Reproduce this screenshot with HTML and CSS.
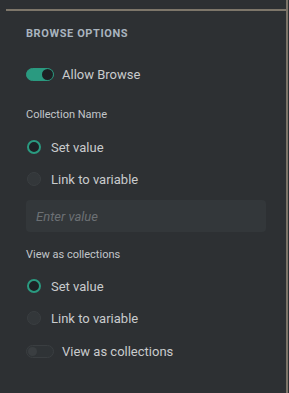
FILE: index.html
```html
<!DOCTYPE html>
<html lang="en">
<head>
  <meta charset="UTF-8" />
  <meta name="viewport" content="width=device-width, initial-scale=1.0"/>
  <title>Browse Options</title>
  <link rel="stylesheet" href="styles.css">
</head>
<body>

<div class="panel">
  <h4 class="section-title">BROWSE OPTIONS</h4>

  <label class="switch-row allow">
    <span class="switch on"><span class="knob"></span></span>
    Allow Browse
  </label>

  <p class="field-label first">Collection Name</p>
  <div class="radio-row"><span class="radio checked"></span>Set value</div>
  <div class="radio-row"><span class="radio"></span>Link to variable</div>
  <input class="text-input" type="text" placeholder="Enter value">

  <p class="field-label second">View as collections</p>
  <div class="radio-row"><span class="radio checked"></span>Set value</div>
  <div class="radio-row"><span class="radio"></span>Link to variable</div>

  <label class="switch-row last">
    <span class="switch"><span class="knob"></span></span>
    View as collections
  </label>
</div>

</body>
</html>
```

FILE: styles.css
```css
body {
  font-family: Roboto, 'Noto Sans', sans-serif;
  margin: 0;
  width: 286px;
  height: 393px;
  background: #2d3033;
  border-right: 2px solid #7d766a;
  overflow: hidden;
}
.panel {
  margin: 9px 0 0 6px;
  width: 240px;
  padding: 0 20px;
  border-top: 2px solid #7d766a;
}
.section-title {
  margin: 15px 0 0;
  font-size: 11px;
  line-height: 16px;
  font-weight: 700;
  letter-spacing: 0.6px;
  color: #a9b4bf;
}
.switch-row {
  display: flex;
  align-items: center;
  gap: 8px;
  height: 20px;
  font-size: 13px;
  color: #c9cbcd;
}
.switch-row.allow {
  margin-top: 22px;
}
.switch-row.last {
  margin-top: 7px;
}
.switch {
  display: flex;
  align-items: center;
  box-sizing: border-box;
  width: 28px;
  height: 13px;
  border-radius: 7px;
  background: #2f3336;
  border: 1px solid #3a3e41;
  padding: 0 1px;
}
.switch .knob {
  width: 9px;
  height: 9px;
  border-radius: 50%;
  background: #3a3e41;
}
.switch.on {
  background: #2a9a80;
  border-color: #2a9a80;
  justify-content: flex-end;
  padding: 0;
}
.switch.on .knob {
  width: 11px;
  height: 11px;
  background: #1d2023;
}
.field-label {
  margin: 0;
  font-size: 11px;
  line-height: 16px;
  color: #c2c6ca;
}
.field-label.first {
  margin-top: 23px;
  margin-bottom: 8px;
}
.field-label.second {
  margin-top: 15px;
  margin-bottom: 7px;
}
.radio-row {
  display: flex;
  align-items: center;
  gap: 10px;
  height: 32px;
  font-size: 13px;
  color: #c9cbcd;
}
.radio {
  box-sizing: border-box;
  width: 14px;
  height: 14px;
  margin-left: 1px;
  border-radius: 50%;
  background: #33373a;
  border: 1px solid #3a3e41;
}
.radio.checked {
  background: #1e2124;
  border: 2px solid #2a9a80;
}
.text-input {
  display: block;
  box-sizing: border-box;
  width: 240px;
  height: 32px;
  margin-top: 5px;
  padding: 0 10px;
  border: none;
  border-radius: 4px;
  background: #33373a;
  font-family: inherit;
  font-size: 13px;
  color: #c9cbcd;
  outline: none;
}
.text-input::placeholder {
  font-style: italic;
  color: #6c7074;
}
```
